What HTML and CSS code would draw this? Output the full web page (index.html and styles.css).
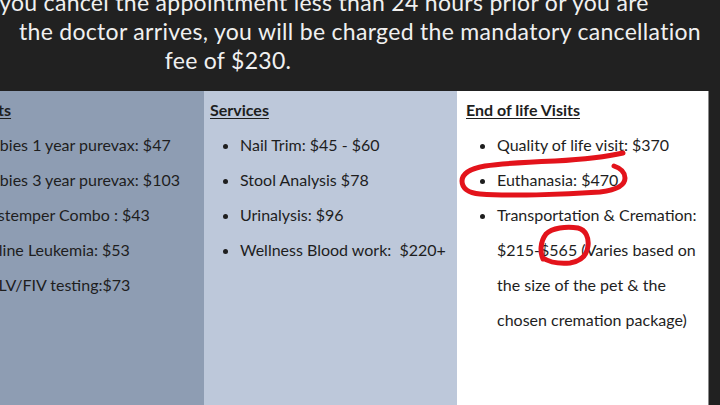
FILE: index.html
```html
<!DOCTYPE html>
<html>
<head>
<meta charset="utf-8">
<link rel="stylesheet" href="styles.css">
</head>
<body>
<div class="page">
  <div class="notice">
    <div class="line l1">If you cancel the appointment less than 24 hours prior or you are</div>
    <div class="line l2">the doctor arrives, you will be charged the mandatory cancellation</div>
    <div class="line l3">fee of $230.</div>
  </div>
  <div class="panel">
    <div class="col col-a">
      <h2 class="head head-a">Vaccines &amp; Tests</h2>
      <ul class="items">
        <li>Rabies 1 year purevax: $47</li>
        <li>Rabies 3 year purevax: $103</li>
        <li>Distemper Combo : $43</li>
        <li>Feline Leukemia: $53</li>
        <li>FeLV/FIV testing:$73</li>
      </ul>
    </div>
    <div class="col col-b">
      <h2 class="head">Services</h2>
      <ul class="items">
        <li>Nail Trim: $45 - $60</li>
        <li>Stool Analysis $78</li>
        <li>Urinalysis: $96</li>
        <li>Wellness Blood work:&nbsp; $220+</li>
      </ul>
    </div>
    <div class="col col-c">
      <h2 class="head">End of life Visits</h2>
      <ul class="items">
        <li>Quality of life visit: $370</li>
        <li>Euthanasia: $470</li>
        <li>Transportation &amp; Cremation:<br>$215-$565 (Varies based on the size of the pet &amp; the chosen cremation package)</li>
      </ul>
    </div>
  </div>
  <svg class="marks" width="720" height="405" viewBox="0 0 720 405">
    <path d="M623 153 C610 156 590 159 555 161 C530 162 505 163 485 166 C468 169 462 175 462 181 C462 188 468 193 480 194 C510 196 560 195 600 192 C616 190 625 185 625 178 C625 172 620 168 614 166" fill="none" stroke="#e3131b" stroke-width="5" stroke-linecap="round" stroke-linejoin="round"/>
    <path d="M543 259 C540 252 540 242 546 234 C552 228 566 226 578 228 C586 230 589 238 588 246 C587 255 582 261 570 263 C558 264 549 262 543 258" fill="none" stroke="#e3131b" stroke-width="5" stroke-linecap="round"/>
  </svg>
</div>
</body>
</html>
```
FILE: styles.css
```css
html, body {
  margin: 0;
  padding: 0;
  background: #212121;
}
.page {
  position: relative;
  width: 720px;
  height: 405px;
  overflow: hidden;
  font-family: Lato, "Liberation Sans", sans-serif;
}
.notice {
  margin-top: -12px;
  color: #f0f0f0;
  font-size: 23px;
  letter-spacing: 0.3px;
  line-height: 29px;
  text-align: center;
  white-space: nowrap;
}
.l1 { margin-left: -92px; }
.l3 { margin-right: 264px; }
.panel {
  margin-top: 16px;
  margin-left: -56px;
  display: grid;
  grid-template-columns: 260px 253px 252px;
  height: 320px;
}
.col {
  padding-top: 9px;
  color: #1e1e1e;
}
.col-a { background: #8e9db3; padding-left: 6px; }
.col-b { background: #bdc8da; padding-left: 6px; }
.col-c {
  background: #ffffff;
  padding-left: 9px;
  padding-right: 2px;
  border-right: 1px solid #8a8a8a;
}
.head {
  margin: 0;
  font-size: 16px;
  line-height: 20px;
  font-weight: 700;
  text-decoration: underline;
  text-underline-offset: 2px;
  text-decoration-thickness: 1px;
}
.head-a { margin-left: -56px; }
.items {
  margin: 7px 0 0 0;
  padding-left: 30px;
  font-size: 16px;
  line-height: 35px;
}
.col-a .items { padding-left: 32px; }
.col-c .items { padding-left: 31px; }
.marks {
  position: absolute;
  left: 0;
  top: 0;
}
```
